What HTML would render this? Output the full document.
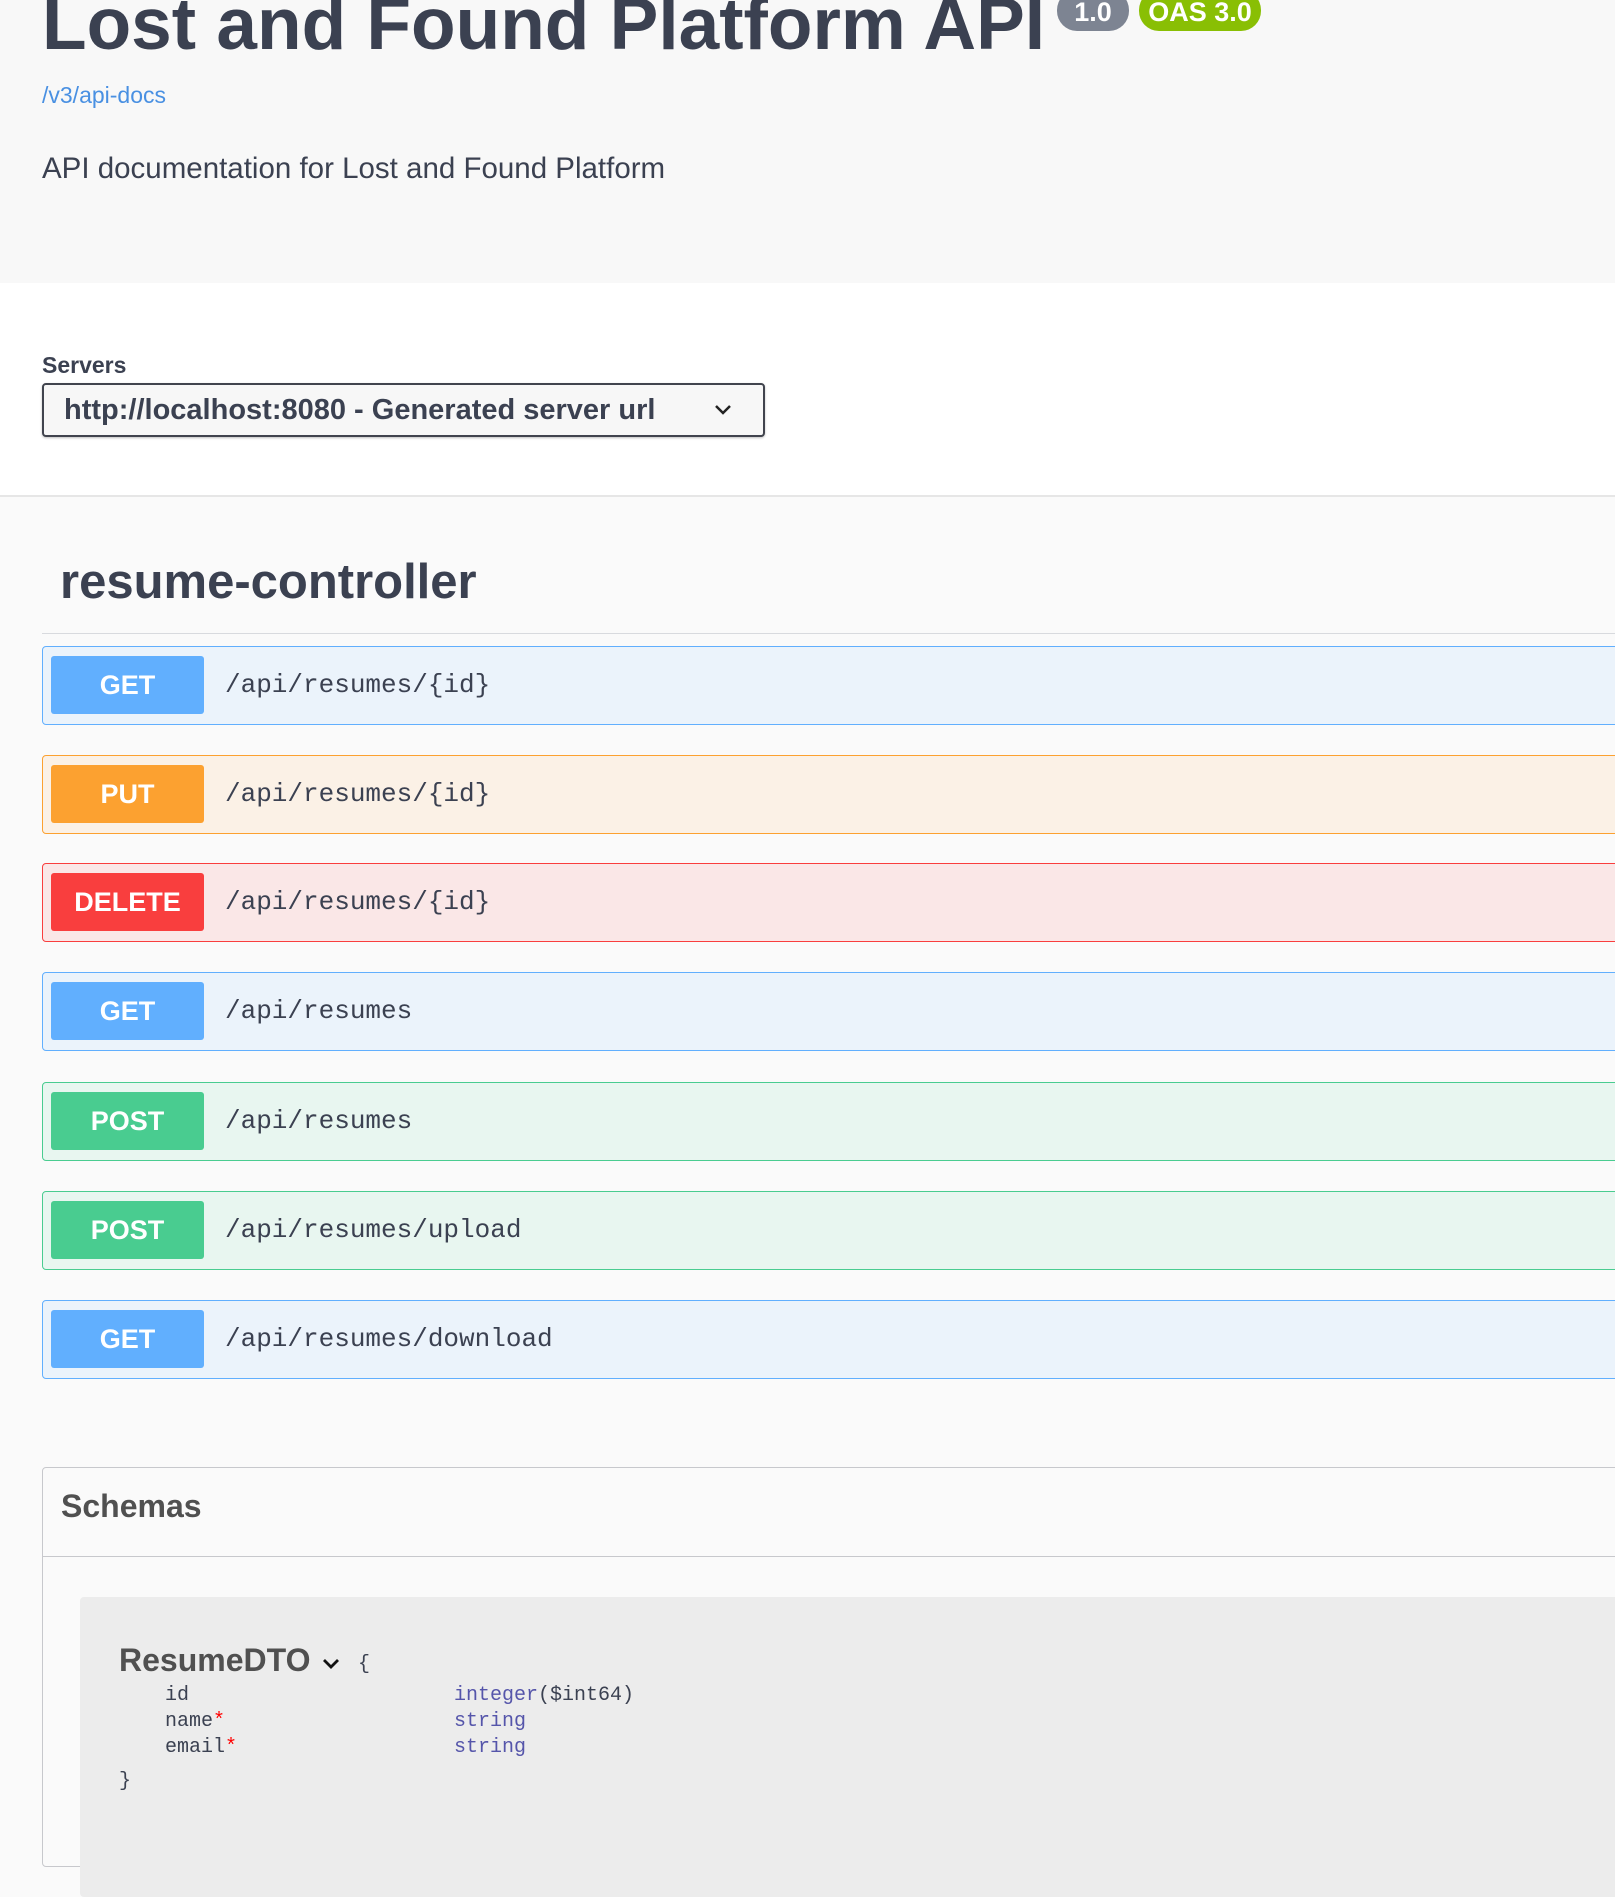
<!DOCTYPE html>
<html><head><meta charset="utf-8"><style>
*{margin:0;padding:0;box-sizing:border-box}
body{width:1615px;height:1811px;overflow:hidden;background:#fafafa;font-family:"Liberation Sans",sans-serif;color:#3b4151;position:relative}
.a{position:absolute}
.hdr{left:0;top:0;width:1615px;height:283px;background:#f8f8f8}
.srv{left:0;top:283px;width:1615px;height:214px;background:#fff;border-bottom:2px solid #e6e6e6}
.title{left:42px;top:-17px;font-size:73px;font-weight:bold;color:#3b4151;white-space:nowrap}
.badge{top:-10px;height:41px;border-radius:20px;color:#fff;font-weight:bold;font-size:27px;text-align:center;line-height:44px}
.op{left:42px;width:1600px;height:79px;border:1px solid;border-radius:4px}
.m{position:absolute;left:8px;top:9px;width:153px;height:58px;border-radius:3px;color:#fff;font-weight:bold;font-size:27px;text-align:center;line-height:58px}
.p{position:absolute;left:182px;top:0;line-height:77px;font-family:"Liberation Mono",monospace;font-size:26px;color:#3b4151}
.get{background:#ebf3fb;border-color:#61affe}.get .m{background:#61affe}
.put{background:#fbf1e6;border-color:#fca130}.put .m{background:#fca130}
.del{background:#fae7e7;border-color:#f93e3e}.del .m{background:#f93e3e}
.post{background:#e8f6f0;border-color:#49cc90}.post .m{background:#49cc90}
.mono{font-family:"Liberation Mono",monospace;font-size:20px}
</style></head><body>
<div class="a hdr"></div>
<div class="a title">Lost and Found Platform API</div>
<div class="a badge" style="left:1057px;width:72px;background:#7d8492">1.0</div>
<div class="a badge" style="left:1139px;width:122px;background:#89bf04">OAS 3.0</div>
<div class="a" style="left:42px;top:82px;font-size:23px;color:#4990e2">/v3/api-docs</div>
<div class="a" style="left:42px;top:152px;font-size:29.5px;color:#3b4151">API documentation for Lost and Found Platform</div>
<div class="a srv"></div>
<div class="a" style="left:42px;top:352px;font-size:23px;font-weight:bold">Servers</div>
<div class="a" style="left:42px;top:383px;width:723px;height:54px;border:2px solid #41444e;border-radius:4px;background:#f7f7f7;box-shadow:0 1px 2px rgba(0,0,0,.25)">
<div class="a" style="left:20px;top:9px;font-size:29px;font-weight:bold;color:#3b4151">http://localhost:8080 - Generated server url</div>
<svg class="a" style="left:670px;top:18px" width="18" height="14" viewBox="0 0 18 14"><path d="M2 3l7 7 7-7" fill="none" stroke="#222" stroke-width="2.5"/></svg>
</div>
<div class="a" style="left:60px;top:554px;font-size:49px;font-weight:bold;color:#3b4151">resume-controller</div>
<div class="a" style="left:42px;top:633px;width:1600px;height:1px;background:#d8dade"></div>
<div class="a op get" style="top:646px"><div class="m">GET</div><div class="p">/api/resumes/{id}</div></div>
<div class="a op put" style="top:755px"><div class="m">PUT</div><div class="p">/api/resumes/{id}</div></div>
<div class="a op del" style="top:863px"><div class="m">DELETE</div><div class="p">/api/resumes/{id}</div></div>
<div class="a op get" style="top:972px"><div class="m">GET</div><div class="p">/api/resumes</div></div>
<div class="a op post" style="top:1082px"><div class="m">POST</div><div class="p">/api/resumes</div></div>
<div class="a op post" style="top:1191px"><div class="m">POST</div><div class="p">/api/resumes/upload</div></div>
<div class="a op get" style="top:1300px"><div class="m">GET</div><div class="p">/api/resumes/download</div></div>
<div class="a" style="left:42px;top:1467px;width:1600px;height:400px;border:1px solid #c7c8cc;border-radius:4px;background:#fafafa"></div>
<div class="a" style="left:61px;top:1488px;font-size:32px;font-weight:bold;color:#505050">Schemas</div>
<div class="a" style="left:43px;top:1556px;width:1600px;height:1px;background:#c7c8cc"></div>
<div class="a" style="left:80px;top:1597px;width:1600px;height:300px;background:#ececec;border-radius:4px"></div>
<div class="a" style="left:119px;top:1642px;font-size:32px;font-weight:bold;color:#505050">ResumeDTO</div>
<svg class="a" style="left:322px;top:1657px" width="18" height="14" viewBox="0 0 18 14"><path d="M2 3l7 7 7-7" fill="none" stroke="#111" stroke-width="2.8"/></svg>
<div class="a mono" style="left:358px;top:1653px;color:#3b4151">{</div>
<div class="a mono" style="left:165px;top:1683px;line-height:26px;color:#3b4151">id<br>name<span style="color:#f00">*</span><br>email<span style="color:#f00">*</span></div>
<div class="a mono" style="left:454px;top:1683px;line-height:26px;color:#55a"><span>integer</span><span style="color:#3b4151">($int64)</span><br>string<br>string</div>
<div class="a mono" style="left:119px;top:1770px;color:#3b4151">}</div>
</body></html>
